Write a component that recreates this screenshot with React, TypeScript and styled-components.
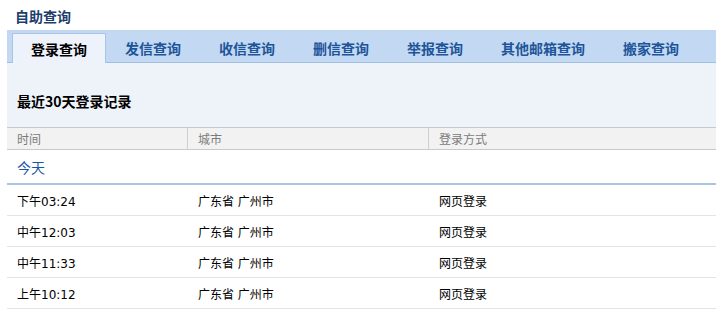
import styled, { createGlobalStyle } from "styled-components";

const GlobalStyle = createGlobalStyle`
  html, body {
    margin: 0;
    padding: 0;
    background: #ffffff;
  }
  body {
    font-family: "DejaVu Sans", "Noto Sans CJK SC", sans-serif;
    font-size: 12px;
  }
  * {
    box-sizing: border-box;
  }
`;

const TABS = ["登录查询", "发信查询", "收信查询", "删信查询", "举报查询", "其他邮箱查询", "搬家查询"];

const RECORDS = [
  { time: "下午03:24", city: "广东省 广州市", way: "网页登录" },
  { time: "中午12:03", city: "广东省 广州市", way: "网页登录" },
  { time: "中午11:33", city: "广东省 广州市", way: "网页登录" },
  { time: "上午10:12", city: "广东省 广州市", way: "网页登录" },
];

const App = () => {
  return (
    <Page>
      <GlobalStyle />
      <Title>自助查询</Title>
      <TabBar>
        {TABS.map((tab, idx) => (
          <Tab key={tab} $active={idx === 0}>
            {tab}
          </Tab>
        ))}
      </TabBar>

      <Panel>
        <PanelTitle>最近30天登录记录</PanelTitle>
      </Panel>

      <Table>
        <HeadRow>
          <HeadCell $width={181}>时间</HeadCell>
          <HeadCell $width={241}>城市</HeadCell>
          <HeadCell $last>登录方式</HeadCell>
        </HeadRow>
        <DayRow>今天</DayRow>
        {RECORDS.map((r, idx) => (
          <Row key={idx}>
            <Cell $width={181}>{r.time}</Cell>
            <Cell $width={241}>{r.city}</Cell>
            <Cell>{r.way}</Cell>
          </Row>
        ))}
      </Table>
    </Page>
  );
};

const Page = styled.div`
  width: 716px;
  padding-left: 7px;
`;

const Title = styled.div`
  height: 30px;
  line-height: 32px;
  padding-left: 8px;
  font-family: "Noto Sans CJK SC", sans-serif;
  font-size: 14px;
  font-weight: bold;
  color: #1d3e6c;
`;

const TabBar = styled.div`
  display: flex;
  align-items: flex-end;
  height: 33px;
  padding-left: 5px;
  background: #c3d9f3;
  border-bottom: 1px solid #a1bfe0;
`;

const Tab = styled.div<{ $active?: boolean }>`
  height: ${(p) => (p.$active ? "30px" : "29px")};
  margin-bottom: ${(p) => (p.$active ? "-1px" : "0")};
  padding: 0 ${(p) => (p.$active ? "18px" : "19px")};
  display: flex;
  align-items: center;
  font-family: "Noto Sans CJK SC", sans-serif;
  font-size: 14px;
  font-weight: bold;
  color: ${(p) => (p.$active ? "#000000" : "#1e5599")};
  background: ${(p) => (p.$active ? "#eef3fb" : "transparent")};
  border: ${(p) => (p.$active ? "1px solid #a8c4e6" : "none")};
  border-bottom: none;
  white-space: nowrap;
`;

const Panel = styled.div`
  height: 64px;
  background: #eef3fa;
  display: flex;
  align-items: center;
  padding-left: 10px;
  padding-top: 12px;
`;

const PanelTitle = styled.div`
  font-family: "Noto Sans CJK SC", sans-serif;
  font-size: 14px;
  font-weight: bold;
  color: #000000;
`;

const Table = styled.div`
  display: flex;
  flex-direction: column;
`;

const HeadRow = styled.div`
  display: flex;
  height: 23px;
  background: #f2f2f2;
  border-top: 1px solid #c9c9c9;
  border-bottom: 1px solid #c9c9c9;
`;

const HeadCell = styled.div<{ $width?: number; $last?: boolean }>`
  ${(p) => (p.$width ? `width: ${p.$width}px;` : "flex: 1;")}
  padding-left: 10px;
  display: flex;
  align-items: center;
  color: #7a7a7a;
  font-family: "Noto Sans CJK SC", sans-serif;
  font-size: 12px;
  border-right: ${(p) => (p.$last ? "none" : "1px solid #cfcfcf")};
`;

const DayRow = styled.div`
  height: 35px;
  padding-left: 10px;
  display: flex;
  align-items: center;
  color: #1a56a6;
  font-family: "Noto Sans CJK SC", sans-serif;
  font-size: 14px;
  border-bottom: 2px solid #a9c5e2;
`;

const Row = styled.div`
  display: flex;
  height: 31px;
  border-bottom: 1px solid #e3e3ea;
`;

const Cell = styled.div<{ $width?: number }>`
  ${(p) => (p.$width ? `width: ${p.$width}px;` : "flex: 1;")}
  padding-left: 10px;
  display: flex;
  align-items: center;
  color: #000000;
  font-size: 12px;
  border-right: 1px solid transparent;
`;

export default App;
